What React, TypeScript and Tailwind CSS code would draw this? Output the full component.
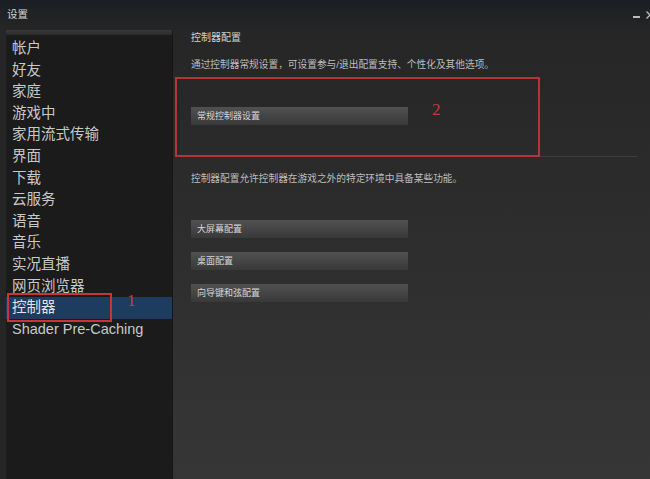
import React from "react";

const items = [
  "帐户",
  "好友",
  "家庭",
  "游戏中",
  "家用流式传输",
  "界面",
  "下载",
  "云服务",
  "语音",
  "音乐",
  "实况直播",
  "网页浏览器",
  "控制器",
  "Shader Pre-Caching",
];

function Btn({ label }: { label: string }) {
  return (
    <div className="flex h-[18px] w-[217px] items-center bg-gradient-to-b from-[#515151] to-[#393939] pl-[6px] text-[9px] leading-none text-[#d6d6d6]">
      {label}
    </div>
  );
}

export default function App() {
  return (
    <div
      className="relative flex h-[479px] w-[650px] flex-col overflow-hidden bg-[#272727]"
      style={{ fontFamily: '"Liberation Sans","Noto Sans CJK SC",sans-serif' }}
    >
      {/* title bar */}
      <div className="flex h-[30px] shrink-0 items-center justify-between bg-gradient-to-b from-[#1b1e24] to-[#262626] pl-[7px]">
        <span className="text-[10.5px] text-[#d2d2d2]">设置</span>
        <div className="flex items-center gap-[6px]">
          <span className="mt-[4px] block h-[2px] w-[7px] bg-[#bdbdbd]" />
          <svg width="4" height="8" viewBox="0 0 4 8" className="block">
            <path d="M0.5 0.5 L4 4" stroke="#bdbdbd" strokeWidth="1.3" />
            <path d="M0.5 7.5 L4 4" stroke="#bdbdbd" strokeWidth="1.3" />
          </svg>
        </div>
      </div>

      {/* body */}
      <div className="flex min-h-0 flex-1">
        <div className="w-[6px] shrink-0 bg-[#262626]" />
        {/* sidebar */}
        <div className="flex w-[166px] shrink-0 flex-col bg-[#1b1b1b]">
          <div className="h-[5px] bg-gradient-to-b from-[#3a3a3a] to-[#2a2a2a]" />
          <div className="pt-[3px]">
            {items.map((it) => (
              <div
                key={it}
                className={
                  "h-[21.6px] pl-[6px] text-[14.5px] leading-[21.6px] text-[#c8c8c8] " +
                  (it === "控制器" ? "bg-[#1d3c60] text-[#e4e4e4]" : "")
                }
              >
                {it}
              </div>
            ))}
          </div>
        </div>
        <div className="w-[1px] shrink-0 bg-[#161616]" />

        {/* main */}
        <div className="flex flex-1 flex-col bg-gradient-to-b from-[#262626] to-[#363636] pl-[18px] pr-[13px] text-[#bdbdbd]">
          <div className="mt-[1px] text-[10px] leading-[14px] text-[#d0d0d0]">控制器配置</div>
          <div className="mt-[13px] text-[9.7px] leading-[14px]">
            通过控制器常规设置，可设置参与/退出配置支持、个性化及其他选项。
          </div>
          <div className="mt-[35px]">
            <Btn label="常规控制器设置" />
          </div>
          <div className="mt-[31px] h-[1px] bg-[#3d3d3d]" />
          <div className="mt-[15px] text-[9.7px] leading-[14px]">
            控制器配置允许控制器在游戏之外的特定环境中具备某些功能。
          </div>
          <div className="mt-[34px] flex flex-col gap-[14px]">
            <Btn label="大屏幕配置" />
            <Btn label="桌面配置" />
            <Btn label="向导键和弦配置" />
          </div>
        </div>
      </div>

      {/* annotations */}
      <div className="absolute left-[7px] top-[293px] h-[29px] w-[105px] border-2 border-[#c8343c]" />
      <div
        className="absolute left-[127px] top-[291px] text-[17px] leading-[20px] text-[#d0343c]"
        style={{ fontFamily: '"Liberation Serif",serif' }}
      >
        1
      </div>
      <div className="absolute left-[175px] top-[77px] h-[80px] w-[365px] border-2 border-[#b8323a]" />
      <div
        className="absolute left-[432px] top-[100px] text-[17px] leading-[20px] text-[#d0343c]"
        style={{ fontFamily: '"Liberation Serif",serif' }}
      >
        2
      </div>
    </div>
  );
}
